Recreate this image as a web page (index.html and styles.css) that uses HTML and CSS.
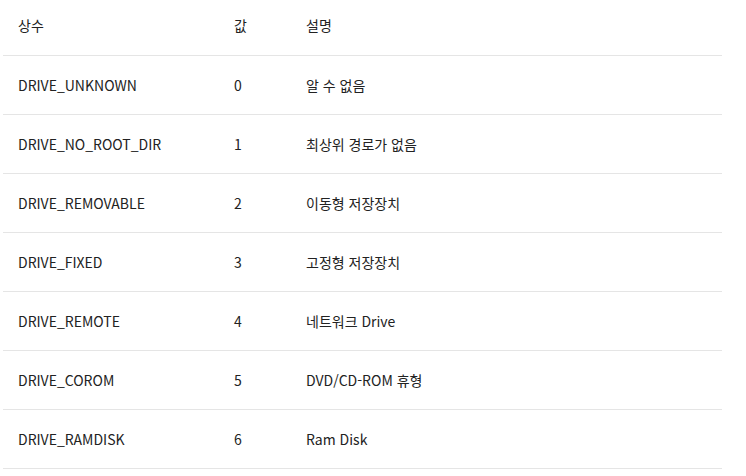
FILE: index.html
```html
<!DOCTYPE html>
<html lang="ko">
<head>
<meta charset="utf-8">
<link rel="stylesheet" href="styles.css">
</head>
<body>
<table class="const-table">
  <colgroup>
    <col class="c-name">
    <col class="c-val">
    <col class="c-desc">
  </colgroup>
  <thead>
    <tr><th>상수</th><th>값</th><th>설명</th></tr>
  </thead>
  <tbody>
    <tr><td>DRIVE_UNKNOWN</td><td>0</td><td>알 수 없음</td></tr>
    <tr><td>DRIVE_NO_ROOT_DIR</td><td>1</td><td>최상위 경로가 없음</td></tr>
    <tr><td>DRIVE_REMOVABLE</td><td>2</td><td>이동형 저장장치</td></tr>
    <tr><td>DRIVE_FIXED</td><td>3</td><td>고정형 저장장치</td></tr>
    <tr><td>DRIVE_REMOTE</td><td>4</td><td>네트워크 Drive</td></tr>
    <tr><td>DRIVE_COROM</td><td>5</td><td>DVD/CD-ROM 휴형</td></tr>
    <tr><td>DRIVE_RAMDISK</td><td>6</td><td>Ram Disk</td></tr>
  </tbody>
</table>
</body>
</html>
```
FILE: styles.css
```css
html, body {
  margin: 0;
  padding: 0;
  background: #fff;
}
body {
  font-family: "Noto Sans CJK KR", "Noto Sans", sans-serif;
  font-size: 14px;
  color: #222;
}
.const-table {
  margin-left: 3px;
  width: 719px;
  border-collapse: collapse;
  table-layout: fixed;
}
.c-name { width: 216px; }
.c-val { width: 72px; }
.const-table th,
.const-table td {
  text-align: left;
  font-weight: normal;
  padding: 0 0 0 15px;
  border-bottom: 1px solid #e5e5e5;
  vertical-align: middle;
  white-space: nowrap;
}
.const-table th {
  height: 49px;
  padding-bottom: 6px;
}
.const-table td {
  height: 58px;
}
```
